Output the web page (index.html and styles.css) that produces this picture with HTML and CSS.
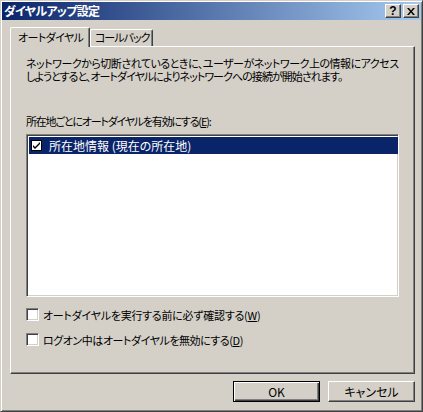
FILE: index.html
```html
<!DOCTYPE html>
<html lang="ja">
<head>
    <meta charset="UTF-8">
    <title>ダイヤルアップ設定</title>
    <link rel="stylesheet" href="styles.css">
</head>
<body>
    <div class="window">
        <div class="titlebar">
            <span class="title">ダイヤルアップ設定</span>
            <div class="caption-buttons">
                <div class="caption-btn help">?</div>
                <div class="caption-btn close">
                    <svg width="8" height="7" viewBox="0 0 8 7">
                        <path d="M0 0h2l2 2.5L6 0h2L5 3.5 8 7H6L4 4.5 2 7H0l3-3.5z" fill="#000"/>
                    </svg>
                </div>
            </div>
        </div>

        <div class="tabs">
            <div class="tab active">オートダイヤル</div>
            <div class="tab callback">コールバック</div>
        </div>

        <div class="panel">
            <p class="intro">
                <span class="line first">ネットワークから切断されているときに、ユーザーがネットワーク上の情報にアクセス</span>
                <span class="line second">しようとすると、オートダイヤルによりネットワークへの接続が開始されます。</span>
            </p>

            <div class="label">所在地ごとにオートダイヤルを有効にする(<u>E</u>):</div>
            <div class="listbox">
                <div class="list-item selected">
                    <span class="list-check">
                        <svg width="9" height="9" viewBox="0 0 9 9">
                            <path d="M1 4l2 2 5-5v2L3 8 1 6z" fill="#000"/>
                        </svg>
                    </span>
                    <span>所在地情報 (現在の所在地)</span>
                </div>
            </div>

            <div class="option confirm">
                <span class="checkbox"></span>
                <span>オートダイヤルを実行する前に必ず確認する(<u>W</u>)</span>
            </div>
            <div class="option logon">
                <span class="checkbox"></span>
                <span>ログオン中はオートダイヤルを無効にする(<u>D</u>)</span>
            </div>
        </div>

        <div class="actions">
            <div class="btn default">OK</div>
            <div class="btn">キャンセル</div>
        </div>
    </div>
</body>
</html>
```

FILE: styles.css
```css
body {
    margin: 0;
    font-family: "Noto Sans CJK JP", sans-serif;
    font-size: 11px;
    font-feature-settings: "palt";
    color: #000;
}
.window {
    box-sizing: border-box;
    width: 423px;
    height: 412px;
    background: #d4d0c8;
    border: 1px solid;
    border-color: #d4d0c8 #404040 #404040 #d4d0c8;
    box-shadow: inset 1px 1px 0 #fff, inset -1px -1px 0 #808080;
    padding: 1px;
}
.titlebar {
    height: 18px;
    display: flex;
    align-items: center;
    justify-content: space-between;
    padding: 0 2px 0 2px;
    background: linear-gradient(to right, #0a246a, #a6caf0);
}
.title {
    color: #fff;
    font-size: 12px;
    font-weight: bold;
    line-height: 18px;
    letter-spacing: -0.7px;
}
.caption-buttons {
    display: flex;
    gap: 2px;
}
.caption-btn {
    box-sizing: border-box;
    width: 16px;
    height: 14px;
    background: #d4d0c8;
    border: 1px solid;
    border-color: #fff #404040 #404040 #fff;
    box-shadow: inset -1px -1px 0 #808080;
    display: flex;
    align-items: center;
    justify-content: center;
}
.help {
    font-family: "Liberation Sans", sans-serif;
    font-weight: bold;
    font-size: 12px;
    line-height: 12px;
}
.tabs {
    display: flex;
    align-items: flex-end;
    height: 19px;
    margin: 7px 0 0 8px;
}
.tab {
    box-sizing: border-box;
    height: 17px;
    width: 63px;
    padding-left: 4px;
    line-height: 15px;
    white-space: nowrap;
    border: 1px solid;
    border-color: #fff #404040 transparent #fff;
    border-bottom: none;
    box-shadow: inset -1px 0 0 #808080;
    border-radius: 2px 2px 0 0;
}
.tab.active {
    position: relative;
    z-index: 1;
    height: 20px;
    width: 80px;
    margin-bottom: -1px;
    padding-left: 7px;
    line-height: 18px;
    letter-spacing: -0.6px;
    background: #d4d0c8;
}
.tab.callback {
    letter-spacing: -1px;
}
.panel {
    box-sizing: border-box;
    width: 405px;
    height: 328px;
    margin-left: 8px;
    padding: 10px 0 0 15px;
    border: 1px solid;
    border-color: #fff #404040 #404040 #fff;
    box-shadow: inset -1px -1px 0 #808080;
}
.intro {
    margin: 0;
    line-height: 13px;
    white-space: nowrap;
}
.line {
    display: block;
}
.line.first {
    letter-spacing: -0.5px;
}
.line.second {
    letter-spacing: -0.95px;
}
.label {
    margin-top: 32px;
    line-height: 13px;
    letter-spacing: -1.2px;
}
.listbox {
    box-sizing: border-box;
    width: 373px;
    height: 163px;
    margin-top: 6px;
    background: #fff;
    border: 1px solid;
    border-color: #808080 #fff #fff #808080;
    box-shadow: inset 1px 1px 0 #404040, inset -1px -1px 0 #d4d0c8;
    padding: 2px 0 0 2px;
}
.list-item {
    display: flex;
    align-items: center;
    gap: 7px;
    height: 17px;
    width: 367px;
    padding-left: 2px;
    font-size: 12px;
    color: #fff;
}
.list-item.selected {
    background: #0a246a;
}
.list-check {
    box-sizing: border-box;
    width: 11px;
    height: 11px;
    background: #fff;
    border: 1px solid #000;
    display: flex;
    align-items: center;
    justify-content: center;
}
.option {
    display: flex;
    align-items: center;
    gap: 4px;
    height: 13px;
    margin-top: 12px;
}
.listbox + .option {
    margin-top: 11px;
}
.option.confirm {
    letter-spacing: -0.25px;
}
.option.logon {
    letter-spacing: -0.45px;
}
.checkbox {
    box-sizing: border-box;
    width: 13px;
    height: 13px;
    background: #fff;
    border: 1px solid;
    border-color: #808080 #fff #fff #808080;
    box-shadow: inset 1px 1px 0 #404040, inset -1px -1px 0 #d4d0c8;
}
.actions {
    display: flex;
    justify-content: flex-end;
    gap: 8px;
    margin: 7px 6px 0 0;
}
.btn {
    box-sizing: border-box;
    width: 87px;
    height: 21px;
    line-height: 19px;
    text-align: center;
    font-size: 12px;
    border: 1px solid;
    border-color: #fff #404040 #404040 #fff;
    box-shadow: inset -1px -1px 0 #808080;
}
.btn.default {
    border-color: #000;
    box-shadow: inset 1px 1px 0 #fff, inset -1px -1px 0 #404040, inset -2px -2px 0 #808080;
}
```
